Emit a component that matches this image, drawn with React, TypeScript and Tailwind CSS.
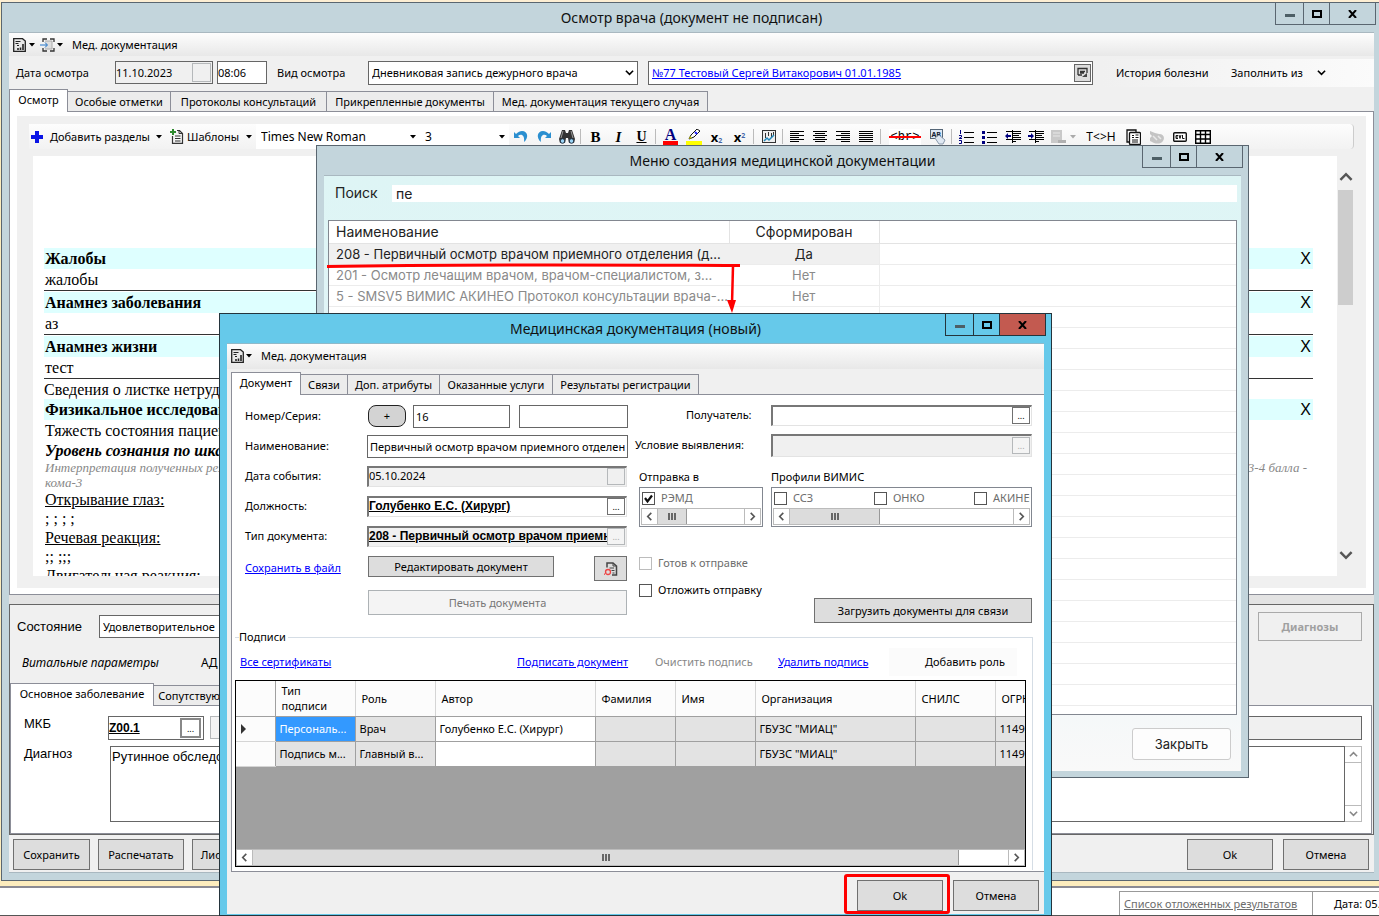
import { ReactNode } from "react";

const UI = "font-['Noto_Sans',sans-serif]";

function Caret({ className = "" }: { className?: string }) {
  return (
    <svg width="6" height="4" viewBox="0 0 6 4" className={`shrink-0 ${className}`} aria-hidden="true">
      <path d="M0 0h6L3 3.5z" fill="currentColor" />
    </svg>
  );
}

function Chevron({ dir, size = 9, className = "" }: { dir: "up" | "down" | "left" | "right"; size?: number; className?: string }) {
  const d = {
    up: "M1 7l4-4 4 4",
    down: "M1 3l4 4 4-4",
    left: "M7 1L3 5l4 4",
    right: "M3 1l4 4-4 4"
  }[dir];
  return (
    <svg width={size} height={size} viewBox="0 0 10 10" className={`shrink-0 ${className}`} aria-hidden="true">
      <path d={d} fill="none" stroke="currentColor" strokeWidth="1.8" />
    </svg>
  );
}

function ReportIcon() {
  return (
    <svg width="13" height="14" viewBox="0 0 13 14" className="shrink-0" aria-hidden="true">
      <path d="M.7 .7h8.800L12.300 3v10.300H.7z" fill="#e8e8e8" stroke="#222" strokeWidth="1.3" />
      <path d="M2.500 3.500h5M2.500 5.500h3M4 7.500h2" stroke="#222" />
      <path d="M5 12v-2M7.500 12V9.500M10 12V6" stroke="#222" strokeWidth="1.600" />
    </svg>
  );
}

function Window({ title, className, close = "", children }: {
  title: string;
  className: string;
  close?: string;
  children: ReactNode;
}) {
  return (
    <section className={`absolute isolate flex flex-col border px-[7px] ${className}`} aria-label={title}>
      <h2 className="shrink-0 text-center text-[14px] leading-[29px] text-[#111]">{title}</h2>
      <div className="absolute right-[5px] top-0 flex h-[22px] border border-t-0 border-inherit">
        <button aria-label="Свернуть" className="flex w-7 items-center justify-center border-r border-inherit">
          <span className="mt-1 h-[3px] w-[10px] bg-[#4d5f66]" />
        </button>
        <button aria-label="Развернуть" className="flex w-[26px] items-center justify-center border-r border-inherit">
          <span className="h-2 w-[10px] border-2 border-black" />
        </button>
        <button aria-label="Закрыть окно" className={`flex w-[45px] items-center justify-center ${close}`}>
          <svg width="9" height="8" viewBox="0 0 9 8" aria-hidden="true">
            <path d="M1 0l7 8M8 0L1 8" stroke="#000" strokeWidth="2" />
          </svg>
        </button>
      </div>
      {children}
    </section>
  );
}

function Tabs({ items }: { items: { label: string; width: string }[] }) {
  return (
    <div role="tablist" className="relative z-10 flex shrink-0 items-end">
      {items.map((t, i) => (
        <button
          key={t.label}
          role="tab"
          aria-selected={i === 0}
          className={`shrink-0 whitespace-nowrap border border-b-0 border-[#8c8e98] ${t.width} ${
            i === 0 ? "-mb-px h-[23px] bg-white pb-[2px]" : "-ml-px h-5 bg-[#ececec]"
          }`}
        >
          {t.label}
        </button>
      ))}
    </div>
  );
}

function Dots({ label, disabled = false }: { label: string; disabled?: boolean }) {
  return (
    <button
      aria-label={label}
      disabled={disabled}
      className={`flex h-[17px] w-[18px] shrink-0 items-center justify-center border text-[9px] leading-none ${
        disabled ? "border-[#b5b8ba] bg-[#f4f4f4] text-[#aaa]" : "border-[#707070] bg-white text-black"
      }`}
    >
      ...
    </button>
  );
}

function Button({ children, className = "", disabled = false }: { children: ReactNode; className?: string; disabled?: boolean }) {
  return (
    <button
      disabled={disabled}
      className={`flex shrink-0 items-center justify-center whitespace-nowrap border ${
        disabled ? "border-[#adb2b5] bg-[#f4f4f4] text-[#777]" : "border-[#707070] bg-[#dddddd]"
      } ${className}`}
    >
      {children}
    </button>
  );
}

function HScroll({ thumb }: { thumb: string }) {
  return (
    <div className="flex h-[17px] shrink-0 border border-[#bbb] bg-white text-[#555]" aria-hidden="true">
      <span className="flex w-4 items-center justify-center border-r border-[#bbb]"><Chevron dir="left" /></span>
      <span className="flex flex-1">
        <span className={`flex items-center justify-center gap-px border-r border-[#999] bg-[#dcdcdc] ${thumb}`}>
          <i className="h-[7px] w-[2px] bg-[#666]" />
          <i className="h-[7px] w-[2px] bg-[#666]" />
          <i className="h-[7px] w-[2px] bg-[#666]" />
        </span>
      </span>
      <span className="flex w-4 items-center justify-center border-l border-[#bbb]"><Chevron dir="right" /></span>
    </div>
  );
}

function Check({ label, checked = false, faded = false, dim = false, className = "" }: {
  label: string;
  checked?: boolean;
  faded?: boolean;
  dim?: boolean;
  className?: string;
}) {
  return (
    <label className={`flex shrink-0 items-center gap-[6px] whitespace-nowrap ${dim ? "text-[#6d6d6d]" : ""} ${className}`}>
      <span className="relative flex">
        <input
          type="checkbox"
          defaultChecked={checked}
          className={`peer size-[13px] appearance-none border bg-white ${faded ? "border-[#bcbcbc]" : "border-[#555]"}`}
        />
        <svg width="13" height="13" viewBox="0 0 13 13" className="pointer-events-none absolute hidden peer-checked:block" aria-hidden="true">
          <path d="M3 6l2.5 3.5L10 3.5" fill="none" stroke="#111" strokeWidth="2.2" />
        </svg>
      </span>
      {label}
    </label>
  );
}

function Lines({ rows }: { rows: [number, number][] }) {
  return (
    <svg width="15" height="11" viewBox="0 0 15 11" aria-hidden="true">
      {rows.map(([x, w], i) => (
        <rect key={i} x={x} y={i * 2} width={w} height="1" fill="#000" />
      ))}
    </svg>
  );
}

function Tool({ label, children, className = "w-[23px]" }: { label: string; children: ReactNode; className?: string }) {
  return (
    <button aria-label={label} className={`flex h-full shrink-0 items-center justify-center ${className}`}>
      {children}
    </button>
  );
}

const Sep = () => <span className="ml-[2px] mr-[3px] h-[15px] w-px shrink-0 bg-[#bbb]" />;

function EditorToolbar() {
  return (
    <div className="mx-3 flex h-[25px] shrink-0 items-center overflow-hidden rounded-r border-r border-[#ccc] bg-linear-to-b from-[#fdfdfd] to-[#f2f2f2]">
      <button className="flex w-[134px] shrink-0 items-center whitespace-nowrap pl-[2px]">
        <svg width="12" height="12" viewBox="0 0 12 12" className="mr-[7px] shrink-0" aria-hidden="true">
          <path d="M4 0h4v4h4v4H8v4H4V8H0V4h4z" fill="#0a14e6" />
        </svg>
        <span className="flex-1 text-left">Добавить разделы</span>
        <Caret className="mr-px" />
      </button>
      <button className="flex w-[93px] shrink-0 items-center whitespace-nowrap pl-[7px]">
        <svg width="14" height="15" viewBox="0 0 14 15" className="mr-[3px] shrink-0" aria-hidden="true">
          <path d="M2.5 7v7.300h10V4.500l-3-3H7" fill="#f4f4f4" stroke="#333" strokeWidth="1.2" />
          <path d="M9 1.500v3h3M5 7h5.500M5 9.500h5.500M5 12h5.500" stroke="#333" fill="none" />
          <path d="M3 0v6M0 3h6" stroke="#2e8b2e" strokeWidth="2" />
        </svg>
        <span className="flex-1 text-left">Шаблоны</span>
        <Caret className="mr-1" />
      </button>
      <div className="relative flex h-full w-[164px] shrink-0 items-center">
        <select aria-label="Шрифт" defaultValue="Times New Roman" className="h-full w-full appearance-none bg-white pl-[5px] text-[12px]">
          <option>Times New Roman</option>
        </select>
        <Caret className="absolute right-1" />
      </div>
      <div className="relative flex h-full w-[89px] shrink-0 items-center">
        <select aria-label="Размер" defaultValue="3" className="h-full w-full appearance-none bg-white pl-[5px] text-[12px]">
          <option>3</option>
        </select>
        <Caret className="absolute right-1" />
      </div>
      <Tool label="Отменить">
        <svg width="16" height="13" viewBox="0 0 16 13" aria-hidden="true">
          <path d="M1 2v6h6L5 6c3-3 7-1 6 6 5-4 4-11-2-11-2 0-4 1-6 3z" fill="#2b8fd0" />
        </svg>
      </Tool>
      <Tool label="Вернуть">
        <svg width="16" height="13" viewBox="0 0 16 13" aria-hidden="true">
          <path d="M15 2v6H9l2-2C8 3 4 5 5 12 0 8 1 1 7 1c2 0 4 1 6 3z" fill="#2b8fd0" />
        </svg>
      </Tool>
      <Tool label="Найти">
        <svg width="16" height="15" viewBox="0 0 16 15" aria-hidden="true">
          <path d="M3 1h3l1 3h2l1-3h3l3 9-1 4h-5L9 9H7l-1 5H1l-1-4z" fill="#333" />
          <path d="M4 2L2 9M12 2l2 7" stroke="#999" />
          <circle cx="3.500" cy="12" r="2.300" fill="#9bd4f5" stroke="#234" />
          <circle cx="12.500" cy="12" r="2.300" fill="#9bd4f5" stroke="#234" />
        </svg>
      </Tool>
      <Sep />
      <Tool label="Полужирный"><b className="font-['Liberation_Serif',serif] text-[15px]">B</b></Tool>
      <Tool label="Курсив"><b className="font-['Liberation_Serif',serif] text-[15px] italic">I</b></Tool>
      <Tool label="Подчёркнутый"><b className="font-['Liberation_Serif',serif] text-[14px] underline">U</b></Tool>
      <Sep />
      <Tool label="Цвет текста">
        <span className="border-b-4 border-[#f00] px-[2px] font-['Liberation_Serif',serif] text-[16px] font-bold leading-3 text-[#00007f]">A</span>
      </Tool>
      <Tool label="Выделение">
        <svg width="16" height="16" viewBox="0 0 16 16" aria-hidden="true">
          <path d="M0 12h16v4H0z" fill="#ff0" />
          <path d="M3 10l2-4 6-6 3 2-6 6z" fill="#fff" stroke="#111" />
          <path d="M9 3l2 2" stroke="#22f" strokeWidth="2" />
          <path d="M3 10l1-3 2 2z" fill="#cc0" />
        </svg>
      </Tool>
      <Tool label="Подстрочный"><b className="text-[13px]">x<sub className="text-[7px] text-[#46a]">2</sub></b></Tool>
      <Tool label="Надстрочный"><b className="text-[13px]">x<sup className="text-[7px] text-[#46a]">2</sup></b></Tool>
      <Sep />
      <Tool label="График">
        <svg width="14" height="13" viewBox="0 0 14 13" aria-hidden="true">
          <rect x=".5" y=".5" width="13" height="12" fill="#eee" stroke="#333" />
          <path d="M3.500 3v5M6.500 2v4M9.500 3v4M11.500 2v3" stroke="#333" />
          <path d="M2 11l3-3 2 2 5-5" stroke="#28b" fill="none" strokeWidth="1.500" />
        </svg>
      </Tool>
      <Sep />
      <Tool label="По левому краю"><Lines rows={[[0, 14], [0, 9], [0, 14], [0, 9], [0, 14], [0, 9]]} /></Tool>
      <Tool label="По центру"><Lines rows={[[0, 14], [2, 10], [0, 14], [2, 10], [0, 14], [2, 10]]} /></Tool>
      <Tool label="По правому краю"><Lines rows={[[0, 14], [5, 9], [0, 14], [5, 9], [0, 14], [5, 9]]} /></Tool>
      <Tool label="По ширине"><Lines rows={[[0, 14], [0, 14], [0, 14], [0, 14], [0, 14], [0, 14]]} /></Tool>
      <Sep />
      <Tool label="Перенос строки" className="w-[42px]">
        <span className="relative bg-white px-[2px] font-['Liberation_Mono',monospace] text-[12px] leading-4">
          &lt;br&gt;
          <i className="absolute inset-x-0 top-[7px] h-[2px] bg-[#f00]" />
        </span>
      </Tool>
      <Tool label="Очистить формат">
        <svg width="16" height="16" viewBox="0 0 16 16" aria-hidden="true">
          <rect x=".5" y=".5" width="12" height="9" fill="#dde8f5" stroke="#567" />
          <text x="1.500" y="7.500" fontSize="7" fontWeight="bold" fill="#123">AB</text>
          <path d="M5 9l4-3 6 5-2 4H9z" fill="#dfe8f2" stroke="#89a" />
        </svg>
      </Tool>
      <Sep />
      <Tool label="Нумерованный список">
        <svg width="15" height="14" viewBox="0 0 15 14" aria-hidden="true">
          <path d="M1.500 0v4M0 5.500h2.500v1.500L0 8.500h3M0 10.500h2.500v3H0" stroke="#00007f" fill="none" />
          <path d="M5 2.500h10M5 7.500h10M5 12.500h10" stroke="#000" />
        </svg>
      </Tool>
      <Tool label="Маркированный список">
        <svg width="15" height="14" viewBox="0 0 15 14" aria-hidden="true">
          <path d="M0 1h3v3H0zM0 6h3v3H0zM0 11h3v3H0z" fill="#00007f" />
          <path d="M5 2.500h10M5 7.500h10M5 12.500h10" stroke="#000" />
        </svg>
      </Tool>
      <Tool label="Уменьшить отступ">
        <svg width="16" height="14" viewBox="0 0 16 14" aria-hidden="true">
          <path d="M1 1.500h15M7 3.500h9M7 5.500h7M7 7.500h9M1 9.500h15M7 11.500h4" stroke="#000" />
          <path d="M0 6l3-3v2h3v2H3v2z" fill="#00007f" />
          <path d="M7.500 0v14" stroke="#000" strokeDasharray="1 1" />
        </svg>
      </Tool>
      <Tool label="Увеличить отступ">
        <svg width="16" height="14" viewBox="0 0 16 14" aria-hidden="true">
          <path d="M1 1.500h15M7 3.500h9M7 5.500h7M7 7.500h9M1 9.500h15M7 11.500h4" stroke="#000" />
          <path d="M6 6L3 3v2H0v2h3v2z" fill="#00007f" />
          <path d="M7.500 0v14" stroke="#000" strokeDasharray="1 1" />
        </svg>
      </Tool>
      <Tool label="Вставка">
        <svg width="15" height="14" viewBox="0 0 15 14" aria-hidden="true">
          <rect width="11" height="13" fill="#c9c9c9" />
          <path d="M2 3h7M2 6h7" stroke="#e8e8e8" />
          <path d="M7 10h8v3H7z" fill="#b0b0b0" />
        </svg>
      </Tool>
      <Caret className="mr-1 text-[#aaa]" />
      <Tool label="Режим HTML" className="w-[42px] text-[12px]">T&lt;&gt;H</Tool>
      <Tool label="Копировать">
        <svg width="15" height="16" viewBox="0 0 15 16" aria-hidden="true">
          <path d="M3 13H1V1h9v2" fill="none" stroke="#111" strokeWidth="1.300" />
          <rect x="3.500" y="3.500" width="11" height="12" rx="1" fill="#fff" stroke="#111" strokeWidth="1.300" />
          <path d="M6 6.500h2M9.500 6h3M6 8.500h2M9.500 8.500h3M6 11h6M6 13h6" stroke="#111" />
        </svg>
      </Tool>
      <Tool label="Лица">
        <svg width="15" height="14" viewBox="0 0 15 14" aria-hidden="true">
          <path d="M1 1l5 2 4 1c5 0 6 4 4 7-2 3-6 3-9 2l-4-2V8l2-2-2-2z" fill="#c4c4c4" />
          <path d="M4 6l4 4M9 6l3 3" stroke="#e9e9e9" strokeWidth="1.500" />
        </svg>
      </Tool>
      <Tool label="Код EVL">
        <svg width="14" height="10" viewBox="0 0 14 10" aria-hidden="true">
          <rect x=".7" y=".7" width="12.600" height="8.600" rx="1" fill="#fff" stroke="#111" strokeWidth="1.400" />
          <path d="M5 3.500H3v3h2M3 5h2M6 3l1 3.500L8 3M9.500 3v3.500H11.500" fill="none" stroke="#111" />
        </svg>
      </Tool>
      <Tool label="Таблица">
        <svg width="16" height="14" viewBox="0 0 16 14" aria-hidden="true">
          <path d="M.7 .7h14.600v12.600H.7zM.7 4.500h15M.7 9h15M5.500 1v13M10.500 1v13" fill="#fff" stroke="#000" strokeWidth="1.400" />
        </svg>
      </Tool>
    </div>
  );
}

function Strip({ children }: { children: ReactNode }) {
  return (
    <div className="flex h-[21px] items-center justify-between bg-[#deffff] pl-px pr-[2px]">
      <b>{children}</b>
      <span className="font-['Liberation_Sans',sans-serif] text-[16px]">X</span>
    </div>
  );
}

function MedRecord() {
  const sections = [
    ["Жалобы", "жалобы"],
    ["Анамнез заболевания", "аз"],
    ["Анамнез жизни", "тест"]
  ];
  return (
    <div className="flex min-h-0 flex-1 pl-4 pr-3">
      <div className="min-w-0 flex-1 overflow-hidden bg-white pl-[11px] pr-6 pt-[92px] font-['Liberation_Serif',serif] text-[16px] leading-[19px]">
        {sections.map(([head, body]) => (
          <div key={head} className="mb-px border-b border-[#333]">
            <Strip>{head}</Strip>
            <p className="pl-px leading-[21px]">{body}</p>
          </div>
        ))}
        <p>Сведения о листке нетрудоспособности</p>
        <Strip>Физикальное исследование</Strip>
        <p className="pl-px leading-[21px]">Тяжесть состояния пациента</p>
        <p className="pl-px font-bold italic">Уровень сознания по шкале Глазго</p>
        <p className="flex justify-between gap-4 pl-px pr-[6px] text-[13px] italic leading-[15px] text-[#888]">
          <span>Интерпретация полученных результатов<br />кома-3</span>
          <span>3-4 балла -</span>
        </p>
        <p className="pl-px underline">Открывание глаз:</p>
        <p className="pl-px">; ; ; ;</p>
        <p className="pl-px underline">Речевая реакция:</p>
        <p className="pl-px">;; ;;;</p>
        <p className="pl-px underline">Двигательная реакция:</p>
      </div>
      <div className="flex w-[17px] flex-col items-center justify-between pb-[14px] pt-[14px] text-[#555]" aria-hidden="true">
        <Chevron dir="up" size={14} />
        <span className="mb-auto mt-[6px] h-[115px] w-[15px] bg-[#cdcdcd]" />
        <Chevron dir="down" size={14} />
      </div>
    </div>
  );
}

function ExamWindow() {
  return (
    <Window
      title="Осмотр врача (документ не подписан)"
      className="-right-[3px] bottom-[35px] left-px top-[2px] border-[#5a6670] bg-[#c3d5dc] pb-[7px]"
    >
      <div className="flex min-h-0 flex-1 flex-col bg-[#f0f0f0]">
        <div className="flex h-6 shrink-0 items-center border-t border-[#a9b8c0] bg-linear-to-b from-[#fdfdfd] to-[#e8e8e8] pl-1">
          <button aria-label="Отчёты" className="flex w-[27px] items-center gap-[3px]"><ReportIcon /><Caret /></button>
          <button aria-label="Переход" className="flex w-8 items-center gap-[2px]">
            <svg width="15" height="14" viewBox="0 0 15 14" className="shrink-0" aria-hidden="true">
              <path d="M3 4V1h4M10 1h4v3M14 10v3h-4M7 13H3v-3" fill="none" stroke="#333" strokeWidth="1.300" />
              <path d="M5 3h7v8H5" fill="#ddd" stroke="#aaa" />
              <path d="M0 7h7M5 4.500L7.500 7 5 9.500" stroke="#27c" fill="none" />
            </svg>
            <Caret />
          </button>
          <button className="whitespace-nowrap">Мед. документация</button>
        </div>

        <div className="flex h-[33px] shrink-0 items-center whitespace-nowrap pl-[7px]">
          <label htmlFor="exam-date" className="w-[99px] shrink-0">Дата осмотра</label>
          <div className="mr-1 flex h-[23px] w-[98px] shrink-0 items-center border border-[#666]">
            <input id="exam-date" defaultValue="11.10.2023" className="min-w-0 flex-1" />
            <button aria-label="Календарь" className="mr-px h-[19px] w-[19px] shrink-0 border border-[#b5b8ba]" />
          </div>
          <input aria-label="Время осмотра" defaultValue="08:06" className="mr-[10px] h-[23px] w-[50px] shrink-0 border border-[#666] bg-white" />
          <label htmlFor="exam-kind" className="w-[91px] shrink-0">Вид осмотра</label>
          <div className="relative mr-[10px] flex h-6 w-[270px] shrink-0 items-center">
            <select id="exam-kind" className="h-full w-full appearance-none border border-[#666] bg-white pl-[3px]">
              <option>Дневниковая запись дежурного врача</option>
            </select>
            <Chevron dir="down" className="absolute right-1" />
          </div>
          <div className="flex h-6 w-[445px] items-center justify-between border border-[#666] bg-white pl-[3px] pr-px">
            <a href="#patient" className="text-[#00f] underline">№77 Тестовый Сергей Витакорович 01.01.1985</a>
            <button aria-label="Карта пациента" className="flex h-[18px] w-[17px] items-center justify-center border border-[#666] bg-[#ddd]">
              <svg width="11" height="11" viewBox="0 0 11 11" aria-hidden="true">
                <path d="M1 8V1.500h9V6M1 8h4M3 4.500h5M3 6h4" fill="none" stroke="#333" strokeWidth="1.300" />
                <path d="M5 10l5-4v4z" fill="#444" />
              </svg>
            </button>
          </div>
          <div className="ml-2 flex h-7 flex-1 items-center bg-linear-to-r from-[#f0f0f0] to-[#fbfbfb] pl-[15px]">
            <button className="w-[115px] shrink-0 text-left">История болезни</button>
            <button className="flex w-[95px] items-center justify-between">Заполнить из <Chevron dir="down" /></button>
          </div>
        </div>

        <Tabs
          items={[
            { label: "Осмотр", width: "w-[59px]" },
            { label: "Особые отметки", width: "w-[104px]" },
            { label: "Протоколы консультаций", width: "w-[157px]" },
            { label: "Прикрепленные документы", width: "w-[168px]" },
            { label: "Мед. документация текущего случая", width: "w-[215px]" }
          ]}
        />
        <div className="flex min-h-0 flex-1 flex-col border border-[#8c8e98] bg-white px-[7px] pb-[6px] pt-1">
          <div className="flex min-h-0 flex-1 flex-col bg-[#f0f0f0] pb-3 pt-2">
            <EditorToolbar />
            <div className="h-[7px] shrink-0" />
            <MedRecord />
          </div>
        </div>

        <div className="h-[9px] shrink-0 bg-[#e3e3e3]" />

        <div className="shrink-0 border border-[#666] pr-px">
          <div className="flex h-[43px] items-center pl-[7px] pr-[10px]">
            <label htmlFor="state" className="w-[82px] shrink-0 font-['Liberation_Sans',sans-serif] text-[13px]">Состояние</label>
            <input id="state" defaultValue="Удовлетворительное" className="h-[23px] w-[200px] border border-[#666] bg-white pl-[3px]" />
            <button disabled className="ml-auto h-[29px] w-[104px] border border-[#aaa] font-bold text-[#a0a0a0]">Диагнозы</button>
          </div>
          <div className="flex h-[35px] items-start pl-3 pt-[7px] text-[12px]">
            <span className="w-[179px] italic">Витальные параметры</span>
            <span>АД</span>
          </div>
          <Tabs
            items={[
              { label: "Основное заболевание", width: "w-[144px]" },
              { label: "Сопутствующие", width: "w-[95px]" }
            ]}
          />
          <div className="flex flex-col gap-[6px] border border-[#8c8e98] bg-white pb-[11px] pl-[13px] pr-[9px] pt-[10px]">
            <div className="flex h-6 items-start">
              <label htmlFor="mkb" className="w-[84px] shrink-0 font-['Liberation_Sans',sans-serif] text-[13px]">МКБ</label>
              <div className="mr-[6px] flex h-6 w-[96px] shrink-0 items-center border border-[#666] pr-[2px]">
                <input id="mkb" defaultValue="Z00.1" className="min-w-0 flex-1 font-['Liberation_Sans',sans-serif] text-[12px] font-bold underline" />
                <button aria-label="Выбрать МКБ" className="h-5 w-[21px] shrink-0 border-2 border-[#888] text-[9px] leading-none">...</button>
              </div>
              <button aria-label="Очистить" className="h-[23px] w-6 shrink-0 border border-[#b5b8ba] bg-[#f4f4f4]" />
              <input aria-label="Название диагноза" className="ml-4 h-6 min-w-0 flex-1 border border-[#666] bg-[#f0f0f0]" />
            </div>
            <div className="flex h-[76px] items-start">
              <label htmlFor="diag" className="w-[86px] shrink-0 font-['Liberation_Sans',sans-serif] text-[13px]">Диагноз</label>
              <textarea id="diag" defaultValue="Рутинное обследование" className="h-full flex-1 resize-none border border-[#666] px-px pt-[2px] font-['Liberation_Sans',sans-serif] text-[13px]" />
              <div className="flex h-full w-[17px] flex-col justify-between border border-l-0 border-[#bbb] text-[#888]" aria-hidden="true">
                <span className="flex h-4 items-center justify-center border-b border-[#bbb]"><Chevron dir="up" /></span>
                <span className="flex h-4 items-center justify-center border-t border-[#bbb]"><Chevron dir="down" /></span>
              </div>
            </div>
          </div>
        </div>

        <div className="flex shrink-0 gap-2 border-b border-[#a9b8c0] pb-[2px] pl-1 pr-[5px] pt-1">
          <Button className="h-[31px] w-[77px]">Сохранить</Button>
          <Button className="h-[31px] w-[86px]">Распечатать</Button>
          <Button className="h-[31px] w-[90px]">Лист осмотра</Button>
          <Button className="ml-auto h-[31px] w-[86px]">Ok</Button>
          <Button className="ml-[2px] h-[31px] w-[86px]">Отмена</Button>
        </div>
      </div>
    </Window>
  );
}

function MenuWindow() {
  const rows = [
    ["208 - Первичный осмотр врачом приемного отделения (д...", "Да"],
    ["201 - Осмотр лечащим врачом, врачом-специалистом, з...", "Нет"],
    ["5 - SMSV5 ВИМИС АКИНЕО Протокол консультации врача-...", "Нет"],
    ...Array.from({ length: 19 }, () => ["", ""])
  ];
  return (
    <Window
      title="Меню создания медицинской документации"
      className="left-[316px] top-[145px] h-[633px] w-[933px] border-[#5a6670] bg-[#c3d5dc] pb-[6px]"
    >
      <div className="flex min-h-0 flex-1 flex-col border-t border-[#a9b8c0] bg-linear-to-b from-[#def5f5] via-[#e2f3f8] to-[#f9f9f9] px-1 font-['Inter',sans-serif] text-[13px] text-[#222]">
        <div className="flex h-11 shrink-0 items-center pb-[10px] pl-[7px] text-[14px]">
          <label htmlFor="search" className="w-[57px]">Поиск</label>
          <input id="search" defaultValue="пе" className="h-[17px] min-w-0 flex-1 bg-white pl-1" />
        </div>
        <div className="min-h-0 flex-1 overflow-hidden border border-[#828790] bg-white">
          <table className="w-full table-fixed border-collapse">
            <colgroup>
              <col className="w-[400px]" />
              <col className="w-[150px]" />
              <col />
            </colgroup>
            <thead>
              <tr className="h-[22px] text-left text-[14px]">
                <th className="border-b border-r border-[#e3e3e3] pl-[7px] font-normal leading-5">Наименование</th>
                <th className="border-b border-r border-[#e3e3e3] text-center font-normal leading-5">Сформирован</th>
                <th className="border-b border-[#e3e3e3]" />
              </tr>
            </thead>
            <tbody>
              {rows.map(([name, done], i) => (
                <tr key={i} className={`h-[21px] border-b border-[#ececec] leading-5 ${i === 0 ? "" : "text-[#8a8a8a]"}`}>
                  <td className={`whitespace-nowrap pl-[7px] ${i === 0 ? "bg-[#f0f0f0]" : ""}`}>{name}</td>
                  <td className={`text-center ${i === 0 ? "bg-[#f0f0f0]" : ""}`}>{done}</td>
                  <td className="border-l border-[#ececec]" />
                </tr>
              ))}
            </tbody>
          </table>
        </div>
        <div className="flex h-14 shrink-0 justify-end pr-[6px] pt-[13px]">
          <button className="h-8 w-[99px] rounded-[3px] border border-[#ccc] bg-[#fdfdfd]">Закрыть</button>
        </div>
      </div>
    </Window>
  );
}

const sunken = "flex items-center border-b border-l-2 border-r border-t-2 border-b-[#e3e3e3] border-l-[#777] border-r-[#e3e3e3] border-t-[#777] pr-px";

function Field({ id, label, value, grey = false, bold = false, dots, disabled = false }: {
  id: string;
  label: string;
  value: string;
  grey?: boolean;
  bold?: boolean;
  dots?: string;
  disabled?: boolean;
}) {
  return (
    <div className="flex h-[30px] items-center">
      <label htmlFor={id} className="w-[122px] shrink-0">{label}</label>
      <div className={`h-[21px] w-[260px] ${sunken} ${grey ? "bg-[#f0f0f0]" : "bg-white"}`}>
        <input
          id={id}
          defaultValue={value}
          className={`min-w-0 flex-1 pb-[2px] ${bold ? "font-['Liberation_Sans',sans-serif] text-[12px] font-bold underline" : ""}`}
        />
        {dots ? <Dots label={dots} disabled={disabled} /> : <button aria-label="Открыть календарь" className="h-[17px] w-[18px] border border-[#b5b8ba]" />}
      </div>
    </div>
  );
}

const link = "whitespace-nowrap text-[#00f] underline";

function SignTable() {
  const heads = ["Тип подписи", "Роль", "Автор", "Фамилия", "Имя", "Организация", "СНИЛС", "ОГРН"];
  const rows = [
    ["Персональ...", "Врач", "Голубенко Е.С. (Хирург)", "", "", 'ГБУЗС "МИАЦ"', "", "1149204001"],
    ["Подпись м...", "Главный в...", "", "", "", 'ГБУЗС "МИАЦ"', "", "1149204001"]
  ];
  return (
    <div className="flex h-[187px] flex-col justify-between overflow-hidden border border-black bg-[#a0a0a0]">
      <div className="overflow-hidden">
        <table className="w-[839px] table-fixed border-collapse text-left">
          <colgroup>
            <col className="w-[39px]" />
            <col className="w-20" />
            <col className="w-20" />
            <col className="w-40" />
            <col className="w-20" />
            <col className="w-20" />
            <col className="w-40" />
            <col className="w-20" />
            <col className="w-20" />
          </colgroup>
          <thead>
            <tr className="h-[35px] bg-[#fcfcfc]">
              <th className="border-b border-r border-[#a0a0a0]" />
              {heads.map((h) => (
                <th key={h} className="border-b border-r border-b-[#a0a0a0] border-r-[#d5d5d5] pl-[6px] pr-4 font-normal leading-[15px]">{h}</th>
              ))}
            </tr>
          </thead>
          <tbody>
            {rows.map((r, i) => (
              <tr key={i} className="h-[25px]">
                <td className="border border-l-0 border-[#d5d5d5] border-r-[#a0a0a0] bg-[#fcfcfc] pl-[5px]">
                  {i === 0 && (
                    <svg width="6" height="10" viewBox="0 0 6 10" aria-hidden="true"><path d="M0 0l5 5-5 5z" fill="#333" /></svg>
                  )}
                </td>
                {r.map((c, j) => (
                  <td
                    key={j}
                    className={`whitespace-nowrap border border-[#a0a0a0] pl-1 ${
                      i === 0 && j === 0 ? "bg-[#3399ff] text-white" : j === 2 ? "bg-white" : "bg-[#e3e3e3]"
                    }`}
                  >
                    {c}
                  </td>
                ))}
              </tr>
            ))}
          </tbody>
        </table>
      </div>
      <HScroll thumb="w-[706px]" />
    </div>
  );
}

function DocWindow() {
  return (
    <Window
      title="Медицинская документация (новый)"
      className="bottom-0 left-[219px] top-[313px] w-[833px] border-[#24343c] bg-[#66c9ea] pb-px"
      close="bg-[#c35a50]"
    >
      <div className="flex min-h-0 flex-1 flex-col bg-[#f0f0f0]">
        <div className="flex h-[26px] shrink-0 items-center border-t border-[#8fb9c9] bg-linear-to-b from-[#fdfdfd] to-[#e8e8e8] pb-px pl-1">
          <button aria-label="Отчёты по документу" className="flex w-[30px] items-center gap-[2px]"><ReportIcon /><Caret /></button>
          <button>Мед. документация</button>
        </div>
        <div className="mt-[3px] flex min-h-0 flex-1 flex-col pl-1">
          <Tabs
            items={[
              { label: "Документ", width: "w-[70px]" },
              { label: "Связи", width: "w-[48px]" },
              { label: "Доп. атрибуты", width: "w-[93px]" },
              { label: "Оказанные услуги", width: "w-[114px]" },
              { label: "Результаты регистрации", width: "w-[147px]" }
            ]}
          />
          <div className="flex min-h-0 flex-1 flex-col border-y border-l border-[#8c8e98] bg-white pl-[3px]">
            <div className="flex pl-[10px] pr-3 pt-[6px]">
              <div className="w-[390px] shrink-0">
                <div className="flex h-[30px] items-center">
                  <label htmlFor="num" className="w-[123px] shrink-0">Номер/Серия:</label>
                  <button aria-label="Новый номер" className="mr-[7px] h-[22px] w-[38px] rounded-lg border border-[#222] bg-[#d3d3d3]">+</button>
                  <input id="num" defaultValue="16" className="mr-[9px] h-[23px] w-[97px] border border-[#666] pl-[2px]" />
                  <input aria-label="Серия" className="h-[23px] w-[109px] border border-[#666]" />
                </div>
                <div className="flex h-[30px] items-center">
                  <label htmlFor="name" className="w-[122px] shrink-0">Наименование:</label>
                  <input id="name" defaultValue="Первичный осмотр врачом приемного отделения" className="h-[23px] w-[261px] border border-[#666] px-[2px]" />
                </div>
                <Field id="evdate" label="Дата события:" value="05.10.2024" grey />
                <Field id="post" label="Должность:" value="Голубенко Е.С. (Хирург)" bold dots="Выбрать должность" />
                <Field id="type" label="Тип документа:" value="208 - Первичный осмотр врачом приемного" bold grey dots="Выбрать тип" disabled />
                <div className="flex items-start pt-[5px]">
                  <a href="#save" className={`mt-1 w-[123px] ${link}`}>Сохранить в файл</a>
                  <Button className="mr-10 h-[21px] w-[186px]">Редактировать документ</Button>
                  <button aria-label="Подписанный файл" className="flex h-[25px] w-[33px] items-center justify-center border border-[#707070] bg-[#ddd]">
                    <svg width="14" height="14" viewBox="0 0 14 14" aria-hidden="true">
                      <path d="M3 5.500V1h6l3.500 3v9H8" fill="none" stroke="#444" strokeWidth="1.500" />
                      <path d="M9 1v3h3M5.500 6h4.500M7.500 8.500h3M8.500 11h2" stroke="#444" fill="none" />
                      <circle cx="4" cy="10" r="2.500" fill="none" stroke="#e44" strokeWidth="1.300" />
                      <path d="M0 13l2-3" stroke="#e44" />
                    </svg>
                  </button>
                </div>
                <Button disabled className="ml-[123px] mt-[9px] h-[25px] w-[259px]">Печать документа</Button>
              </div>

              <div className="min-w-0 flex-1">
                <div className="flex h-7 items-center">
                  <label htmlFor="recv" className="w-[136px] shrink-0 pl-[51px]">Получатель:</label>
                  <div className={`h-[21px] flex-1 ${sunken}`}>
                    <input id="recv" className="min-w-0 flex-1" />
                    <Dots label="Выбрать получателя" />
                  </div>
                </div>
                <div className="mt-[2px] flex h-7 items-center">
                  <label htmlFor="cond" className="w-[136px] shrink-0 whitespace-nowrap">Условие выявления:</label>
                  <div className={`h-[23px] flex-1 bg-[#f0f0f0] ${sunken}`}>
                    <input id="cond" className="min-w-0 flex-1" />
                    <Dots label="Выбрать условие" disabled />
                  </div>
                </div>
                <div className="mt-2 flex gap-2 pl-1">
                  <div className="w-[124px] shrink-0">
                    <p className="leading-5">Отправка в</p>
                    <div className="h-10 border border-[#828790] px-px">
                      <Check label="РЭМД" checked dim className="h-5 pl-px" />
                      <HScroll thumb="w-[29px]" />
                    </div>
                  </div>
                  <div className="min-w-0 flex-1">
                    <p className="leading-5">Профили ВИМИС</p>
                    <div className="h-10 border border-[#828790] px-px">
                      <div className="flex overflow-hidden pl-px">
                        <Check label="ССЗ" dim className="h-5 w-[100px]" />
                        <Check label="ОНКО" dim className="h-5 w-[100px]" />
                        <Check label="АКИНЕО" dim className="h-5" />
                      </div>
                      <HScroll thumb="w-[90px]" />
                    </div>
                  </div>
                </div>
                <div className="pl-1 pt-[27px]">
                  <Check label="Готов к отправке" faded dim className="h-[18px]" />
                  <Check label="Отложить отправку" className="mt-[9px] h-[18px]" />
                </div>
                <Button className="-mt-px ml-auto h-[25px] w-[218px]">Загрузить документы для связи</Button>
              </div>
            </div>

            <fieldset className="mr-[11px] mt-[6px] min-w-0 border border-b-0 border-l-0 border-[#d5dde5] pb-[3px] pr-[6px]">
              <legend className="ml-1 pr-[2px] leading-4">Подписи</legend>
              <div className="flex h-[35px] items-center pb-px pl-[5px]">
                <span className="w-[277px]"><a href="#certs" className={link}>Все сертификаты</a></span>
                <span className="w-[138px]"><a href="#sign" className={link}>Подписать документ</a></span>
                <span className="mr-6 w-[99px] overflow-hidden whitespace-nowrap text-[#888]">Очистить подпись</span>
                <span className="w-[111px]"><a href="#del" className={link}>Удалить подпись</a></span>
                <button className="h-7 w-[128px] bg-[#fbfbfb] pl-6">Добавить роль</button>
              </div>
              <SignTable />
            </fieldset>
          </div>
          <div className="flex h-[42px] shrink-0 items-start justify-end gap-[10px] pr-[5px] pt-2">
            <span className="relative">
              <Button className="h-[31px] w-[86px]">Ok</Button>
              <i className="pointer-events-none absolute -left-[13px] -right-[7px] -top-[6px] h-10 rounded-[3px] border-[3px] border-[#f00]" />
            </span>
            <Button className="h-[31px] w-[86px]">Отмена</Button>
          </div>
        </div>
      </div>
    </Window>
  );
}

export default function App() {
  return (
    <main className={`relative flex min-h-screen flex-col justify-between overflow-hidden bg-[#fdedbd] text-[11px] leading-4 text-black ${UI}`}>
      <div className="h-[2px] bg-[#fdeed3]" />
      <footer className="flex h-[30px] items-stretch justify-end border-b border-t-2 border-b-[#555] border-t-[#8b8b93] bg-white pt-[3px]">
        <a href="#pending" className="flex w-[193px] items-center whitespace-nowrap border-l border-t border-[#999] pl-1 text-[#6d6d6d] underline">
          Список отложенных результатов
        </a>
        <span className="flex w-[67px] items-center overflow-hidden whitespace-nowrap border-l border-t border-[#999] pl-[21px]">Дата: 05.10.2024</span>
      </footer>
      <ExamWindow />
      <MenuWindow />
      {/* стрелка-подсказка */}
      <svg width="416" height="52" viewBox="0 0 416 52" className="absolute left-[326px] top-[262px]" aria-hidden="true">
        <path d="M1 4.500C140 2 280 3 414 3.500" fill="none" stroke="#f00" strokeWidth="3" />
        <path d="M407 4l-1 38" stroke="#f00" strokeWidth="2.500" />
        <path d="M401 38h9l-4 13z" fill="#f00" />
      </svg>
      <DocWindow />
    </main>
  );
}
